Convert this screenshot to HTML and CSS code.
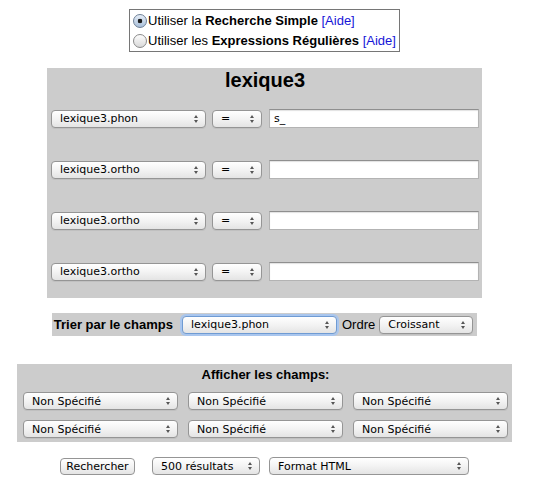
FILE: index.html
```html
<!DOCTYPE html>
<html lang="fr">
<head>
  <meta charset="UTF-8" />
  <title>Lexique - Recherche</title>
  <link rel="stylesheet" href="styles.css">
</head>
<body>
  <form class="page">

    <!-- Mode de recherche -->
    <div class="mode-box">
      <label class="mode"><input type="radio" name="mode" checked>Utiliser la <b>Recherche Simple</b> <a href="#">[Aide]</a></label>
      <label class="mode"><input type="radio" name="mode">Utiliser les <b>Expressions Régulières</b> <a href="#">[Aide]</a></label>
    </div>

    <!-- Critères -->
    <div class="query">
      <h1>lexique3</h1>
      <div class="crit-list">
        <div class="crit">
          <span class="sel field"><select><option>lexique3.phon</option></select></span>
          <span class="sel op"><select><option>=</option></select></span>
          <input type="text" value="s_">
        </div>
        <div class="crit">
          <span class="sel field"><select><option>lexique3.ortho</option></select></span>
          <span class="sel op"><select><option>=</option></select></span>
          <input type="text">
        </div>
        <div class="crit">
          <span class="sel field"><select><option>lexique3.ortho</option></select></span>
          <span class="sel op"><select><option>=</option></select></span>
          <input type="text">
        </div>
        <div class="crit">
          <span class="sel field"><select><option>lexique3.ortho</option></select></span>
          <span class="sel op"><select><option>=</option></select></span>
          <input type="text">
        </div>
      </div>
    </div>

    <!-- Tri -->
    <div class="sort">
      <b>Trier par le champs</b>
      <span class="sel field"><select class="focus"><option>lexique3.phon</option></select></span>
      <span class="label">Ordre</span>
      <span class="sel order"><select><option>Croissant</option></select></span>
    </div>

    <!-- Champs affichés -->
    <div class="fields">
      <h2>Afficher les champs:</h2>
      <div class="fields-grid">
        <span class="sel"><select><option>Non Spécifié</option></select></span>
        <span class="sel"><select><option>Non Spécifié</option></select></span>
        <span class="sel"><select><option>Non Spécifié</option></select></span>
        <span class="sel"><select><option>Non Spécifié</option></select></span>
        <span class="sel"><select><option>Non Spécifié</option></select></span>
        <span class="sel"><select><option>Non Spécifié</option></select></span>
      </div>
    </div>

    <div class="actions">
      <button type="button">Rechercher</button>
      <span class="sel limit"><select><option>500 résultats</option></select></span>
      <span class="sel format"><select><option>Format HTML</option></select></span>
    </div>

  </form>
</body>
</html>
```

FILE: styles.css
```css
* { box-sizing: border-box; }
body {
  margin: 0;
  font-family: "Liberation Sans", Arial, sans-serif;
  font-size: 13px;
  color: #000;
  background: #fff;
}

.page {
  width: 529px;
  padding-top: 9px;
  display: flex;
  flex-direction: column;
  align-items: center;
}

/* mode de recherche */
.mode-box {
  border: 1px solid #767676;
  padding: 1px 3px 0 3px;
}
.mode {
  display: block;
  line-height: 20px;
  white-space: nowrap;
}
.mode a { color: #1515d8; text-decoration: none; }
.mode input {
  -webkit-appearance: none;
  appearance: none;
  width: 14px;
  height: 14px;
  margin: 0 1px 0 0;
  border: 1px solid #8a8a8a;
  border-radius: 50%;
  background: linear-gradient(#fdfdfd, #d9d9d9);
  vertical-align: -3px;
}
.mode input:checked {
  border-color: #6d7f96;
  background: radial-gradient(circle, #1c1c1c 0 2px, transparent 2.6px),
              linear-gradient(#e6eef8, #a9bfd9);
}

/* selects façon mac */
.sel {
  position: relative;
  display: inline-block;
  width: 155px;
  height: 18px;
}
.sel select {
  -webkit-appearance: none;
  appearance: none;
  width: 100%;
  height: 18px;
  margin: 0;
  padding: 0 18px 0 8px;
  border: 1px solid #959595;
  border-radius: 4px;
  background: linear-gradient(#ffffff, #f3f3f3 50%, #e4e4e4);
  box-shadow: 0 1px 0 rgba(0,0,0,0.06);
  font-family: "DejaVu Sans", Verdana, sans-serif;
  font-size: 11px;
  color: #000;
  outline: none;
}
.sel::before, .sel::after {
  content: "";
  position: absolute;
  right: 8px;
  top: 50%;
  border-left: 2.5px solid transparent;
  border-right: 2.5px solid transparent;
  pointer-events: none;
}
.sel::before { margin-top: -4px; border-bottom: 3px solid #555; }
.sel::after { margin-top: 1px; border-top: 3px solid #555; }
.sel select.focus {
  border-color: #6f9bd3;
  box-shadow: 0 0 0 2px #a9c6ee;
}

/* critères */
.query {
  width: 435px;
  margin-top: 16px;
  background: #ccc;
  padding: 0 3px 17px 4px;
}
.query h1 {
  margin: 0 0 17px;
  font-size: 20px;
  line-height: 24px;
  text-align: center;
}
.crit-list {
  display: flex;
  flex-direction: column;
  gap: 32px;
}
.crit {
  display: flex;
  align-items: center;
  height: 19px;
}
.crit .op { width: 50px; margin: 0 7px 0 6px; }
.crit input {
  width: 210px;
  height: 19px;
  margin: 0;
  padding: 0 4px;
  border: 1px solid #b3b3b3;
  border-top-color: #8f8f8f;
  box-shadow: inset 0 1px 1px rgba(0,0,0,0.12);
  background: #fff;
  font-family: "DejaVu Sans", Verdana, sans-serif;
  font-size: 11px;
}

/* tri */
.sort {
  margin-top: 15px;
  height: 23px;
  background: #ccc;
  display: flex;
  align-items: center;
  padding: 0 4px 0 2px;
}
.sort b { margin-right: 9px; }
.sort .label { margin: 0 4px 0 5px; }
.sort .order { width: 94px; }

/* champs affichés */
.fields {
  width: 495px;
  margin-top: 28px;
  background: #ccc;
  padding: 3px 4px 4px 6px;
}
.fields h2 {
  margin: 0 0 9px;
  font-size: 13px;
  line-height: 16px;
  text-align: center;
}
.fields-grid {
  display: grid;
  grid-template-columns: repeat(3, 155px);
  column-gap: 10px;
  row-gap: 10px;
}

/* actions */
.actions {
  margin-top: 15px;
  display: flex;
  align-items: center;
}
.actions button {
  width: 75px;
  height: 17px;
  margin-right: 17px;
  padding: 0;
  border: 1px solid #959595;
  border-radius: 4px;
  background: linear-gradient(#ffffff, #f3f3f3 50%, #e4e4e4);
  font-family: "DejaVu Sans", Verdana, sans-serif;
  font-size: 11px;
  color: #000;
}
.actions .limit { width: 108px; margin-right: 9px; }
.actions .format { width: 200px; }
```
